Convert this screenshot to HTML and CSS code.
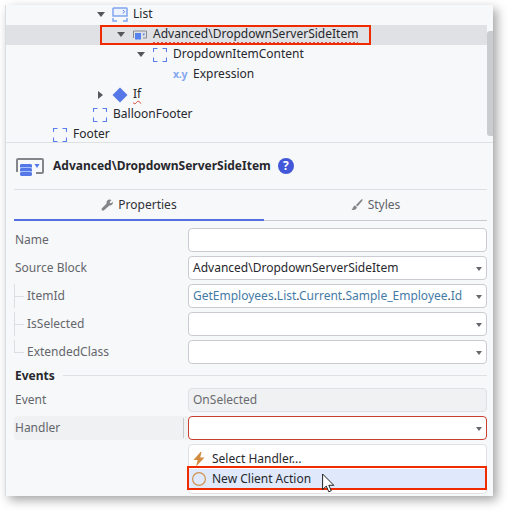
FILE: index.html
```html
<!DOCTYPE html>
<html lang="en">
<head>
<meta charset="utf-8">
<title>Widget properties</title>
<link rel="stylesheet" href="styles.css">
</head>
<body>
<svg width="0" height="0" class="defs">
  <symbol id="placeholder" viewBox="0 0 14 14"><path d="M.5 4V.5H4.500M9.500 .5h4V4M13.500 9.500v4h-4M4.500 13.500h-4v-4" fill="none" stroke="#5b7fe8" stroke-width="1.1"/></symbol>
  <symbol id="block" viewBox="0 0 28 18"><path d="M1 14V2q0-1 1-1h24q1 0 1 1v12q0 1-1 1h-6" fill="none" stroke="#85868b" stroke-width="2"/><path d="M5 6h10l1 1v2l-1 1 1 1v2l-1 1 1 1v2l-1 1H5l-1-1v-2l1-1-1-1v-2l1-1-1-1V7z" fill="#5478e8"/><path d="M5 9.500h10M5 13.500h10" stroke="#a8c1fa"/><path d="M18.500 6h5l-2.500 4z" fill="#5478e8"/></symbol>
</svg>
<main class="panel">
  <section class="tree">
    <div class="node l3"><i class="arrow open"></i><svg class="icon list" viewBox="0 0 16 15"><path d="M1 9V1.700Q1 1 1.700 1h12.600q.7 0 .7.7V9z" fill="#edf3ff" stroke="#80a5f2" stroke-width="1.500"/><path d="M1 11v3h4M11 14h4v-3" fill="none" stroke="#80a5f2" stroke-width="1.500"/><path d="M11 3l1.500 1.700L11 6.500" fill="none" stroke="#5b7fe8"/></svg><span>List</span></div>
    <div class="node l4 selected"><i class="arrow open"></i><svg class="icon small" viewBox="0 0 14 10"><path d="M.5 8V1h13v7H10" fill="none" stroke="#898b92"/><path d="M2 3h6v6.500H2zM9.500 3.500H12L10.750 6z" fill="#5582ee"/></svg><span class="error">Advanced\DropdownServerSideItem</span></div>
    <div class="node l5"><i class="arrow open"></i><svg class="icon"><use href="#placeholder"/></svg><span>DropdownItemContent</span></div>
    <div class="node l6"><i class="arrow"></i><b class="icon xy">x.y</b><span>Expression</span></div>
    <div class="node l3"><i class="arrow closed"></i><svg class="icon diamond" viewBox="0 0 16 16"><path d="M8 .5L15.500 8 8 15.500.5 8z" fill="#5578e8"/></svg><span class="error wavy">If</span></div>
    <div class="node l2"><i class="arrow"></i><svg class="icon"><use href="#placeholder"/></svg><span>BalloonFooter</span></div>
    <div class="node l0"><i class="arrow"></i><svg class="icon"><use href="#placeholder"/></svg><span>Footer</span></div>
    <div class="scrollbar"></div>
    <div class="callout callout-tree"></div>
  </section>
  <section class="props">
    <header class="title"><svg class="block-icon"><use href="#block"/></svg><h1>Advanced\DropdownServerSideItem</h1><span class="help">?</span></header>
    <nav class="tabs">
      <div class="tab active"><svg width="12" height="12" viewBox="0 0 12 12"><path d="M10.600 1.100L8.700 3l.3 1.100 1.100.2 1.700-1.600c.5 2-1.200 4.100-3.300 3.800L3 11.300c-1.500 1.200-3.200-.6-2.100-2L5.600 4.500C4.900 2.200 7.200-.8 10.600 1.100z" fill="#85868a"/></svg><span>Properties</span></div>
      <div class="tab"><svg width="12" height="12" viewBox="0 0 12 12"><path d="M11.500 0v1.400L6.500 7.500 5 6 10 .8zM4.200 6.500l1.700 1.700C5.300 11 2.800 11.300.5 10.700 2.300 9.800 1.700 7 4.200 6.500z" fill="#85868a"/></svg><span>Styles</span></div>
    </nav>
    <div class="form">
      <div class="row"><label>Name</label><div class="field"></div></div>
      <div class="row"><label>Source Block</label><div class="field select">Advanced\DropdownServerSideItem</div></div>
      <div class="row child"><label>ItemId</label><div class="field select"><span class="expr">GetEmployees<em>.</em>List<em>.</em>Current<em>.</em>Sample_Employee<em>.</em>Id</span></div></div>
      <div class="row child"><label>IsSelected</label><div class="field select"></div></div>
      <div class="row child last"><label>ExtendedClass</label><div class="field select"></div></div>
      <h2>Events</h2>
      <div class="row"><label>Event</label><div class="field disabled">OnSelected</div></div>
      <div class="row current"><label>Handler</label><div class="field select invalid"></div></div>
      <div class="menu">
        <div class="option"><svg width="14" height="16" viewBox="0 0 14 16"><path d="M8.500 1L1.500 9h4.200L4 15.500 12.500 6.500H8.200L9.500 1z" fill="#d18a3e"/></svg><span>Select Handler...</span></div>
        <div class="option hover"><svg width="14" height="14" viewBox="0 0 14 14"><circle cx="7" cy="7" r="6.400" fill="none" stroke="#cf934f" stroke-width="1.200"/></svg><span>New Client Action</span></div>
        <div class="callout callout-menu"></div>
        <svg class="cursor" width="13" height="20" viewBox="0 0 13 20"><path d="M.6 1v15.500l3.700-3.400 2.500 5.700 2.500-1.100-2.500-5.400h5z" fill="#fff" stroke="#222" stroke-width="1"/></svg>
      </div>
    </div>
  </section>
</main>
</body>
</html>
```
FILE: styles.css
```css
* { box-sizing: border-box; }
body {
  margin: 0;
  padding: 5px 15px 15px 5px;
  background: #fff;
  font: 12px/20px "Noto Sans", sans-serif;
  color: #27282d;
}
.defs { position: absolute; }
.panel {
  width: 488px;
  height: 491px;
  background: #f7f8fa;
  border-left: 1px solid #dcdde0;
  box-shadow: 4px 4px 10px rgba(0, 0, 0, .36);
}
.tree {
  position: relative;
  height: 138px;
  border-bottom: 1px solid #dfe0e3;
}
.node {
  display: flex;
  align-items: center;
  height: 20px;
  margin-right: 6px;
  white-space: nowrap;
}
.node > span { height: 20px; line-height: 18px; }
.l0 { padding-left: 27px; }
.l2 { padding-left: 67px; }
.l3 { padding-left: 87px; }
.l4 { padding-left: 107px; }
.l5 { padding-left: 127px; }
.l6 { padding-left: 147px; }
.selected { background: #e0e1e4; }
.arrow { width: 20px; flex: none; }
.arrow::before { content: ""; display: block; margin-left: 4px; width: 0; }
.open::before { margin-top: -1px; border: 4px solid transparent; border-top: 5px solid #55575c; border-bottom: 0; }
.closed::before { margin: -1px 0 0 5px; border: 4px solid transparent; border-left: 5px solid #55575c; border-right: 0; }
.icon { width: 14px; height: 14px; margin: -1px 6px 0 0; flex: none; }
.icon.small { height: 10px; }
.icon.list { width: 16px; height: 15px; margin: -1px 5px 0 -1px; }
.icon.diamond { width: 16px; height: 16px; margin: -1px 5px 0 -1px; }
.icon.xy { font-size: 10.5px; line-height: 14px; margin-top: -3px; color: #83a6ef; letter-spacing: -.2px; }
.error { background: repeating-linear-gradient(90deg, #d0574a 0 2px, transparent 2px 4px) 0 17px / 100% 1px no-repeat; }
.wavy { background: none; text-decoration: underline wavy #d04a3a 1px; text-underline-offset: 2px; }
.scrollbar { position: absolute; top: 26px; right: 0; width: 6px; height: 105px; background: #cbccd0; border-radius: 3px 0 0 3px; }
.callout { position: absolute; border: 2px solid #f02b00; }
.callout-tree { left: 94px; top: 20px; width: 271px; height: 20px; }
.props { padding: 0 6px 0 8px; }
.title { display: flex; align-items: center; height: 47px; border-bottom: 1px solid #dfe0e3; }
.block-icon { width: 28px; height: 18px; margin: 2px 9px 0 2px; flex: none; }
h1 { margin: 0 0 1px; font-size: 12px; line-height: 20px; white-space: nowrap; }
.help {
  width: 16px;
  height: 16px;
  margin-left: 7px;
  border-radius: 50%;
  background: #4358d8;
  color: #fff;
  font-size: 12px;
  font-weight: 700;
  line-height: 16px;
  text-align: center;
}
.tabs { display: flex; height: 31px; }
.tab {
  display: flex;
  flex: 1;
  align-items: center;
  justify-content: center;
  gap: 5px;
  padding-bottom: 1px;
  border-bottom: 1px solid #c9cace;
  color: #606268;
}
.tab.active { flex: 0 0 250px; padding-bottom: 0; border-bottom: 2px solid #536ee2; color: #303136; }
.form { padding-top: 7px; }
.row { display: flex; height: 24px; margin-bottom: 4px; }
label { position: relative; width: 174px; flex: none; padding-left: 1px; line-height: 23px; color: #64666b; }
.field {
  position: relative;
  flex: 1;
  padding-left: 4px;
  background: #fff;
  border: 1px solid #caccd1;
  border-radius: 4px;
  line-height: 21px;
  white-space: nowrap;
}
.select::after {
  content: "";
  position: absolute;
  right: 4px;
  top: 10px;
  border: 3px solid transparent;
  border-top: 4px solid #66686d;
  border-bottom: 0;
}
.expr { color: #457ba7; }
.expr em { font-style: normal; color: #35363b; }
.child label { padding-left: 13px; }
.child label::before { content: ""; position: absolute; left: 0; top: 0; width: 1px; height: 24px; background: #dcdee1; }
.child label::after { content: ""; position: absolute; left: 0; top: 12px; width: 10px; height: 1px; background: #dcdee1; }
.child.last label::before { height: 12px; }
h2 {
  display: flex;
  align-items: center;
  gap: 8px;
  height: 20px;
  margin: 0;
  padding: 0 0 5px 1px;
  font-size: 12px;
  line-height: 15px;
}
h2::after { content: ""; flex: 1; height: 1px; background: #dfe0e3; }
.disabled { background: #f0f1f3; border-color: #e0e1e4; color: #696b70; }
.current label { background: #f0f1f3; border-radius: 4px 0 0 4px; }
.current label::after { content: ""; position: absolute; right: 4px; top: 2px; width: 1px; height: 20px; background: #c6c8cc; }
.field.invalid { border-color: #c8412f; }
.menu {
  position: relative;
  height: 50px;
  margin-left: 174px;
  padding-top: 4px;
  background: #fff;
  border: 1px solid #dfe1e5;
  border-radius: 4px;
}
.option { display: flex; align-items: center; gap: 6px; height: 20px; padding-left: 3px; }
.option svg { flex: none; }
.option span { line-height: 20px; height: 20px; }
.hover { background: #e0e9fb; }
.callout-menu { left: -2px; top: 21px; width: 300px; height: 24px; }
.cursor { position: absolute; left: 133px; top: 28px; }
```
